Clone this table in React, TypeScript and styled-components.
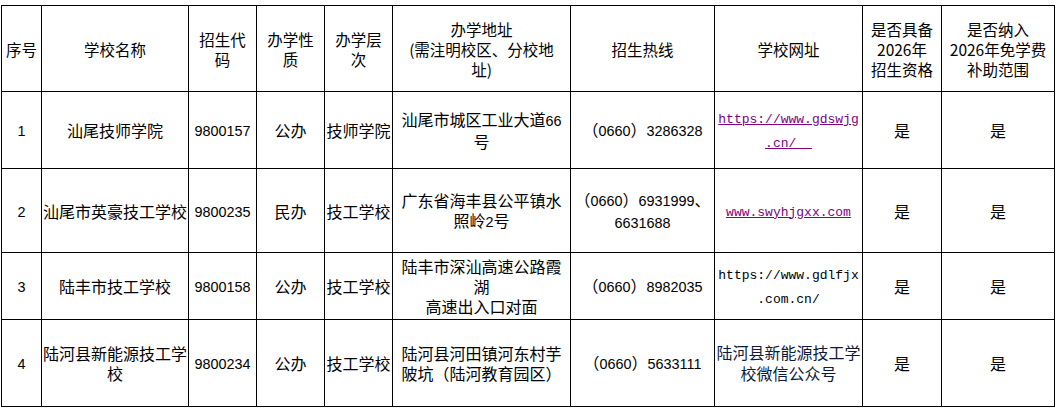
import React from "react";
import styled, { createGlobalStyle } from "styled-components";

const GlobalStyle = createGlobalStyle`
  html, body { margin: 0; padding: 0; background: #fff; }
  body { font-family: "Noto Sans CJK SC", sans-serif; color: #000; }
`;

const Page = styled.div`
  padding: 5px 0 0 1px;
`;

const Table = styled.table`
  border-collapse: collapse;
  table-layout: fixed;
  width: 1054px;
`;

const Col = styled.col<{ $w: number }>`
  width: ${(p) => p.$w}px;
`;

const Row = styled.tr<{ $h: number }>`
  height: ${(p) => p.$h}px;
`;

const HeadCell = styled.th`
  border: 1px solid #000;
  padding: 0;
  font-family: "Noto Sans CJK SC", sans-serif;
  font-weight: 400;
  font-size: 15.5px;
  line-height: 20px;
  text-align: center;
  vertical-align: middle;
  white-space: nowrap;
  color: #000;
`;

const Cell = styled.td<{ $lh?: number }>`
  border: 1px solid #000;
  padding: 0;
  font-family: "Noto Sans CJK SC", sans-serif;
  font-size: 16px;
  line-height: ${(p) => p.$lh ?? 20}px;
  text-align: center;
  vertical-align: middle;
  white-space: nowrap;
  color: #000;
`;

const Num = styled.span`
  font-family: "Liberation Sans", sans-serif;
  font-size: 14.4px;
`;

const Url = styled.a<{ $plain?: boolean }>`
  font-family: "Liberation Mono", monospace;
  font-size: 13px;
  color: ${(p) => (p.$plain ? "#000" : "#800080")};
  text-decoration: ${(p) => (p.$plain ? "none" : "underline")};
  white-space: pre;
`;

const Wechat = styled.span`
  color: #0d1a3c;
`;

const widths = [40, 147, 68, 68, 68, 178, 144, 148, 79, 113];

export default function App() {
  return (
    <>
      <GlobalStyle />
      <Page>
        <Table>
          <colgroup>
            {widths.map((w, i) => (
              <Col key={i} $w={w} />
            ))}
          </colgroup>
          <thead>
            <Row $h={86}>
              <HeadCell>序号</HeadCell>
              <HeadCell>学校名称</HeadCell>
              <HeadCell>招生代<br />码</HeadCell>
              <HeadCell>办学性<br />质</HeadCell>
              <HeadCell>办学层<br />次</HeadCell>
              <HeadCell>办学地址<br />(需注明校区、分校地<br />址)</HeadCell>
              <HeadCell>招生热线</HeadCell>
              <HeadCell>学校网址</HeadCell>
              <HeadCell>是否具备<br />2026年<br />招生资格</HeadCell>
              <HeadCell>是否纳入<br />2026年免学费<br />补助范围</HeadCell>
            </Row>
          </thead>
          <tbody>
            <Row $h={77}>
              <Cell><Num>1</Num></Cell>
              <Cell>汕尾技师学院</Cell>
              <Cell><Num>9800157</Num></Cell>
              <Cell>公办</Cell>
              <Cell>技师学院</Cell>
              <Cell>汕尾市城区工业大道<Num>66</Num><br />号</Cell>
              <Cell>（<Num>0660</Num>）<Num>3286328</Num></Cell>
              <Cell>
                <Url href="#">https://www.gdswjg</Url>
                <br />
                <Url href="#">{".cn/  "}</Url>
              </Cell>
              <Cell>是</Cell>
              <Cell>是</Cell>
            </Row>
            <Row $h={84}>
              <Cell><Num>2</Num></Cell>
              <Cell>汕尾市英豪技工学校</Cell>
              <Cell><Num>9800235</Num></Cell>
              <Cell>民办</Cell>
              <Cell>技工学校</Cell>
              <Cell>广东省海丰县公平镇水<br />照岭<Num>2</Num>号</Cell>
              <Cell>（<Num>0660</Num>）<Num>6931999</Num>、<br /><Num>6631688</Num></Cell>
              <Cell>
                <Url href="#">www.swyhjgxx.com</Url>
              </Cell>
              <Cell>是</Cell>
              <Cell>是</Cell>
            </Row>
            <Row $h={67}>
              <Cell><Num>3</Num></Cell>
              <Cell>陆丰市技工学校</Cell>
              <Cell><Num>9800158</Num></Cell>
              <Cell>公办</Cell>
              <Cell>技工学校</Cell>
              <Cell>陆丰市深汕高速公路霞<br />湖<br />高速出入口对面</Cell>
              <Cell>（<Num>0660</Num>）<Num>8982035</Num></Cell>
              <Cell>
                <Url $plain>https://www.gdlfjx</Url>
                <br />
                <Url $plain>.com.cn/</Url>
              </Cell>
              <Cell>是</Cell>
              <Cell>是</Cell>
            </Row>
            <Row $h={87}>
              <Cell><Num>4</Num></Cell>
              <Cell>陆河县新能源技工学<br />校</Cell>
              <Cell><Num>9800234</Num></Cell>
              <Cell>公办</Cell>
              <Cell>技工学校</Cell>
              <Cell>陆河县河田镇河东村芋<br />陂坑（陆河教育园区）</Cell>
              <Cell>（<Num>0660</Num>）<Num>5633111</Num></Cell>
              <Cell $lh={21}>
                <Wechat>陆河县新能源技工学<br />校微信公众号</Wechat>
              </Cell>
              <Cell>是</Cell>
              <Cell>是</Cell>
            </Row>
          </tbody>
        </Table>
      </Page>
    </>
  );
}
